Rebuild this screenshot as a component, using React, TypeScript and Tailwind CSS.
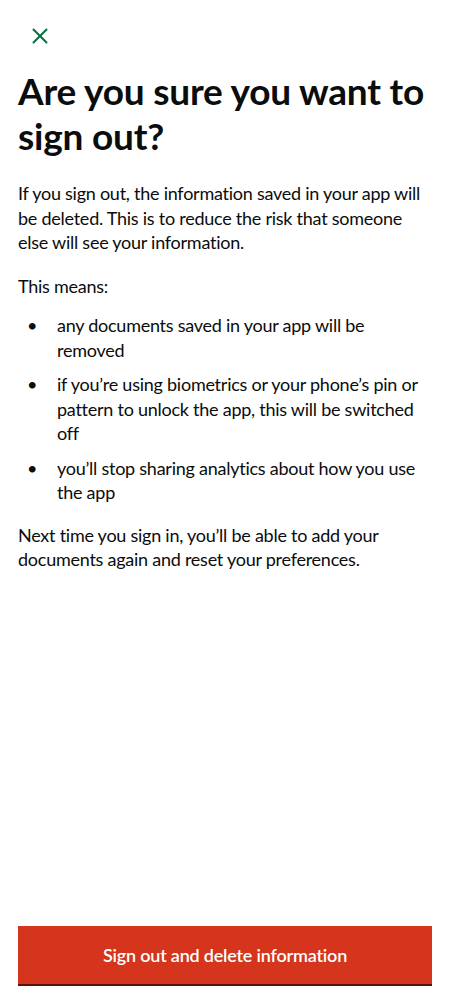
import { X } from "lucide-react";

const points = [
  "any documents saved in your app will be removed",
  "if you’re using biometrics or your phone’s pin or pattern to unlock the app, this will be switched off",
  "you’ll stop sharing analytics about how you use the app",
];

export default function App() {
  return (
    <div className="flex min-h-[1000px] flex-col bg-white px-[18px] text-[#0b0c0c] [font-family:Lato,'Noto_Sans',sans-serif]">
      <div className="pt-[23px] pl-[9px]">
        <X size={26} strokeWidth={1.8} className="text-[#00703c]" />
      </div>
      <h1 className="mt-[19px] text-[37px] font-bold leading-[45px] tracking-[-0.2px]">
        Are you sure you want to sign out?
      </h1>
      <div className="mt-[23px] text-[18px] leading-[24.5px] tracking-[-0.25px]">
        <p>
          If you sign out, the information saved in your app will be deleted. This is to reduce the
          risk that someone else will see your information.
        </p>
        <p className="mt-[19px]">This means:</p>
        <ul className="mt-[15px] flex flex-col gap-[10px]">
          {points.map((p) => (
            <li key={p} className="flex">
              <span className="w-[39px] shrink-0 pl-[9px]">•</span>
              <span>{p}</span>
            </li>
          ))}
        </ul>
        <p className="mt-[18px]">
          Next time you sign in, you’ll be able to add your documents again and reset your
          preferences.
        </p>
      </div>
      <div className="mt-auto pb-[16px]">
        <button
          type="button"
          className="h-[58px] w-full bg-[#d4351c] text-[18px] font-semibold tracking-[-0.2px] text-white shadow-[0_2px_0_#55150b]"
        >
          Sign out and delete information
        </button>
      </div>
    </div>
  );
}
